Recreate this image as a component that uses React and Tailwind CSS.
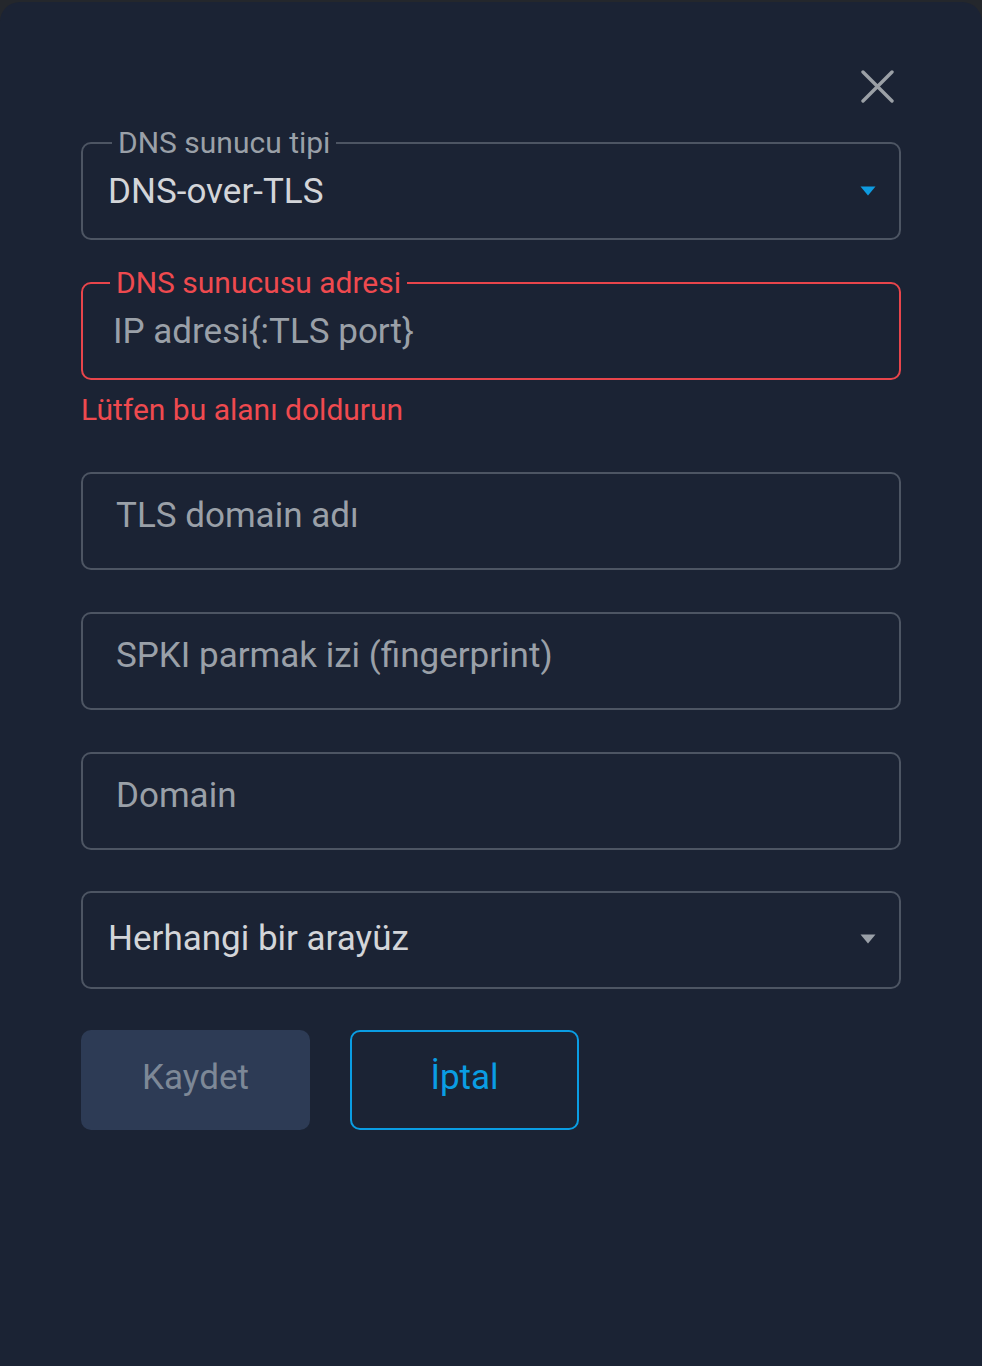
import React from "react";

function Caret({ color }) {
  return (
    <svg width="16" height="10" viewBox="0 0 16 10" className="shrink-0">
      <path d="M0.5 0.5 L15.5 0.5 L8 9.5 Z" fill={color} />
    </svg>
  );
}

function PlainField({ text }) {
  return (
    <div className="h-[98px] rounded-[10px] border-2 border-[#4d5563] flex items-center pb-[10px] pl-[33px]">
      <span className="text-[35px] leading-[40px] text-[#9aa0a8]">{text}</span>
    </div>
  );
}

export default function App() {
  return (
    <div
      className="min-h-[1366px] w-full bg-[#24272c] pt-[2px]"
      style={{ fontFamily: "Roboto, 'Noto Sans', sans-serif" }}
    >
      <div className="min-h-[1364px] rounded-t-[20px] bg-[#1b2334] px-[81px] pt-[68px]">
        <div className="flex justify-end pr-[7px]">
          <svg width="33" height="33" viewBox="0 0 33 33">
            <path d="M2 2 L31 31 M31 2 L2 31" stroke="#9ba0a6" strokeWidth="3.4" strokeLinecap="round" />
          </svg>
        </div>

        <fieldset className="mt-[24px] h-[113px] rounded-[10px] border-2 border-[#4d5563] p-0 m-0">
          <legend className="ml-[29px] px-[6px] text-[30px] leading-[32px] text-[#9aa0a8]">DNS sunucu tipi</legend>
          <div className="flex h-[79px] items-start justify-between pl-[25px] pr-[23px] pt-[13px]">
            <span className="text-[35px] leading-[40px] text-[#d3d5d9]">DNS-over-TLS</span>
            <div className="pt-[14px]">
              <Caret color="#0e9be0" />
            </div>
          </div>
        </fieldset>

        <fieldset className="mt-[27px] h-[113px] rounded-[10px] border-2 border-[#e8454b] p-0 m-0">
          <legend className="ml-[27px] px-[6px] text-[30px] leading-[32px] text-[#ef4a4f]">DNS sunucusu adresi</legend>
          <div className="flex h-[79px] items-start pl-[30px] pt-[13px]">
            <span className="text-[35px] leading-[40px] text-[#9aa0a8]">IP adresi{"{"}:TLS port{"}"}</span>
          </div>
        </fieldset>

        <div className="mt-[14px] text-[30px] leading-[32px] text-[#ef4a4f]">Lütfen bu alanı doldurun</div>

        <div className="mt-[46px] flex flex-col gap-[42px]">
          <PlainField text="TLS domain adı" />
          <PlainField text="SPKI parmak izi (fingerprint)" />
          <PlainField text="Domain" />
        </div>

        <div className="mt-[41px] h-[98px] rounded-[10px] border-2 border-[#4d5563] flex items-center justify-between pl-[25px] pr-[23px] pb-[2px]">
          <span className="text-[35px] leading-[40px] text-[#d3d5d9]">Herhangi bir arayüz</span>
          <Caret color="#9aa0a8" />
        </div>

        <div className="mt-[41px] flex gap-[40px]">
          <div className="flex h-[100px] w-[229px] items-center justify-center rounded-[10px] bg-[#2d3b55] pb-[4px]">
            <span className="text-[35px] leading-[40px] text-[#7d8897]">Kaydet</span>
          </div>
          <div className="flex h-[100px] w-[229px] items-center justify-center rounded-[10px] border-2 border-[#0a9de3] pb-[4px]">
            <span className="text-[35px] leading-[40px] text-[#0a9de3]">İptal</span>
          </div>
        </div>
      </div>
    </div>
  );
}
